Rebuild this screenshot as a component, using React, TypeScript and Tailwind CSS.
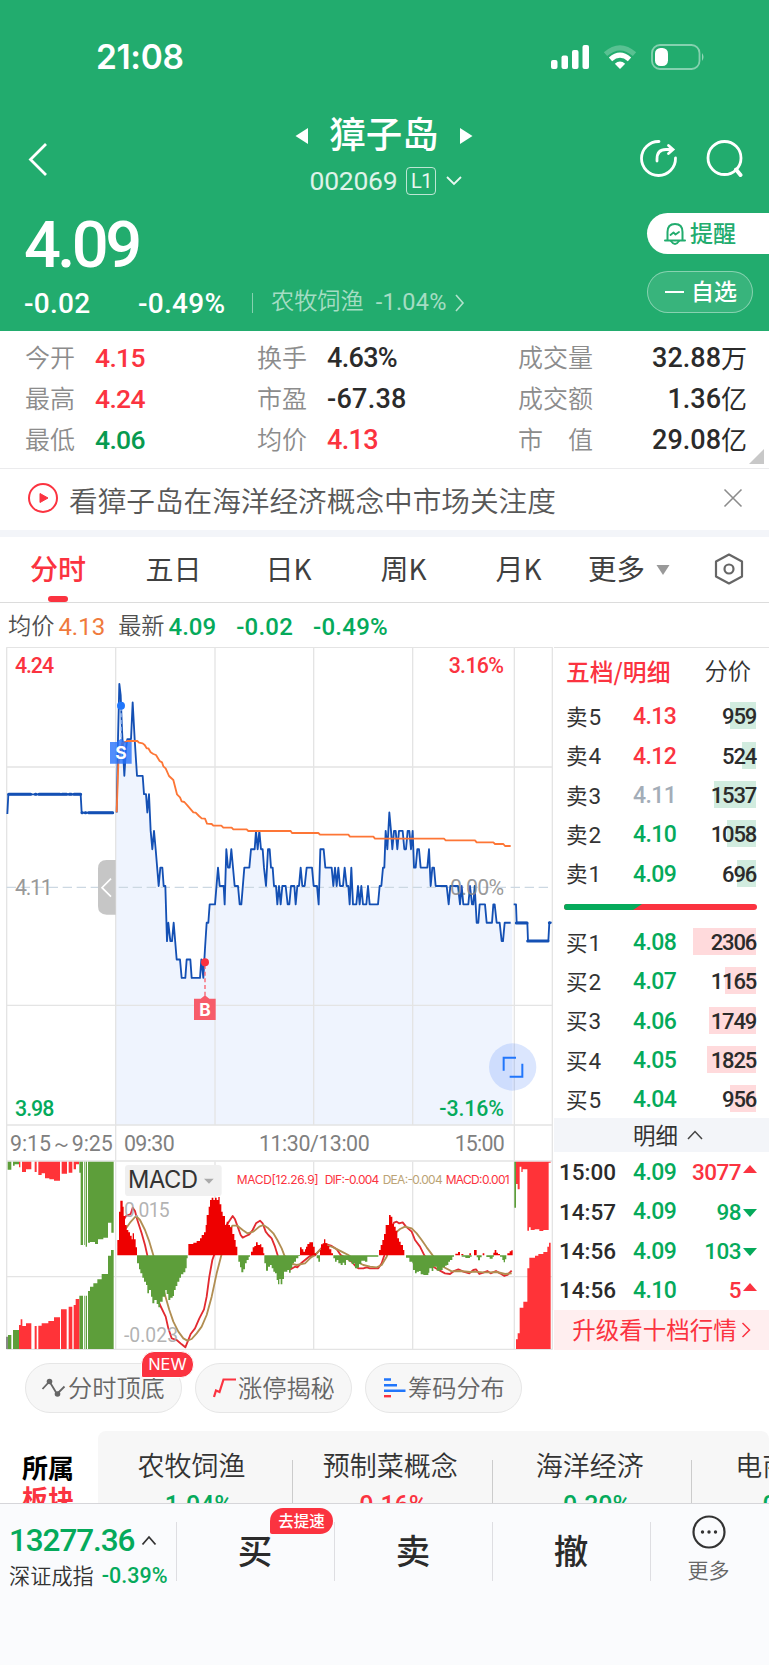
import React from 'react';
import clsx from 'clsx';

type Pt = [number, number];

interface NumProps {
  className?: string;
  children: React.ReactNode;
}

const Num: React.FC<NumProps> = ({ className, children }) => (
  <span className={clsx("font-['Roboto',sans-serif] font-medium leading-none tracking-[-0.025em] whitespace-nowrap", className)}>
    {children}
  </span>
);

const quotes = [
  [['今开', '4.15', 'text-[#fb3340]'], ['换手', '4.63%', 'text-[#2b2b2b]'], ['成交量', '32.88', '万']],
  [['最高', '4.24', 'text-[#fb3340]'], ['市盈', '-67.38', 'text-[#2b2b2b]'], ['成交额', '1.36', '亿']],
  [['最低', '4.06', 'text-[#079a50]'], ['均价', '4.13', 'text-[#fb3340]'], ['市　值', '29.08', '亿']],
];

const asks = [
  { label: '卖5', price: '4.13', qty: 959, bar: 26, color: 'text-[#fb3340]' },
  { label: '卖4', price: '4.12', qty: 524, bar: 14, color: 'text-[#fb3340]' },
  { label: '卖3', price: '4.11', qty: 1537, bar: 42, color: 'text-[#a3adb8]' },
  { label: '卖2', price: '4.10', qty: 1058, bar: 29, color: 'text-[#05aa5b]' },
  { label: '卖1', price: '4.09', qty: 696, bar: 19, color: 'text-[#05aa5b]' },
];

const bids = [
  { label: '买1', price: '4.08', qty: 2306, bar: 63, color: 'text-[#05aa5b]' },
  { label: '买2', price: '4.07', qty: 1165, bar: 31, color: 'text-[#05aa5b]' },
  { label: '买3', price: '4.06', qty: 1749, bar: 47, color: 'text-[#05aa5b]' },
  { label: '买4', price: '4.05', qty: 1825, bar: 49, color: 'text-[#05aa5b]' },
  { label: '买5', price: '4.04', qty: 956, bar: 26, color: 'text-[#05aa5b]' },
];

const ticks = [
  { time: '15:00', price: '4.09', qty: 3077, up: true },
  { time: '14:57', price: '4.09', qty: 98, up: false },
  { time: '14:56', price: '4.09', qty: 103, up: false },
  { time: '14:56', price: '4.10', qty: 5, up: true },
];

// [x, ticks below the previous close]
const morning: Pt[] = [
  [350, -4], [354, -8], [358, -11], [362, -10.4], [366, -8.5], [373, -6], [378, -7.5], [382, -8], [393, -8], [398, -10], [404, -8], [411, -6],
  [428, -6], [432, -5], [438, -5], [442, -4], [447, -5], [452, -3], [457, -2], [462, -3], [467, -2], [476, 0], [481, -1], [487, -1],
  [491, 0], [496, 0], [501, 3], [505, 2], [511, 3], [516, 3], [521, 2], [530, 4], [540, 4], [545, 5], [556, 5], [560, 4], [571, 4],
  [575, 5], [600, 5], [604, 4], [610, 5], [615, 3.4], [620, 2], [625, 2], [629, 1], [645, 1], [654, -1], [659, 0], [671, 0], [674, 1],
  [679, -2], [684, -1], [689, -1], [694, -2], [704, 0], [714, 0], [719, 1], [724, 1], [733, -1], [748, -1], [753, -2], [764, -2],
  [768, -3], [773, -2], [778, -3], [783, -2], [788, -2], [792, -1], [798, 0], [804, -2], [809, -2], [813, -1], [818, -1], [822, 0],
  [828, 0], [832, 1], [837, 0], [842, 1], [847, 0], [857, 0], [863, 1], [868, 1], [873, 0], [883, 0], [887, 1], [892, 0], [897, 0],
  [902, -1], [907, 0], [914, 0], [920, -1], [936, -1], [941, 0],
];

const afternoon: Pt[] = [
  [951, 0], [956, 1], [961, -2], [971, -2], [976, -1], [995, -1], [1000, 0], [1005, -1], [1010, 0], [1015, -1], [1020, 0], [1029, 0],
  [1034, -1], [1040, 0], [1045, 0], [1049, 1], [1054, -1], [1059, 1], [1069, 1], [1074, 0], [1079, 1], [1084, 0], [1089, 1], [1099, 1],
  [1104, 0], [1109, 1], [1134, 1], [1139, 0], [1144, 0], [1149, -1], [1153, -1], [1157, -3], [1162, -2], [1168, -4], [1173, -3],
  [1177, -2], [1182, -3], [1187, -3], [1192, -2], [1197, -3], [1208, -3], [1213, -2], [1218, -2], [1223, -3], [1228, -3], [1233, -2],
  [1238, -3], [1242, -1], [1247, -1], [1252, -2], [1257, -2], [1262, -1], [1282, -1], [1287, -2], [1292, 0], [1297, -1], [1302, -1],
  [1307, 0], [1340, 0], [1346, 1], [1351, 0], [1374, 0], [1380, 1], [1385, 0], [1390, 1], [1405, 1], [1410, 0], [1416, 1], [1420, 1],
  [1424, 0], [1430, 2], [1435, 2], [1439, 1], [1455, 1], [1460, 2], [1476, 2], [1480, 1], [1484, 1], [1490, 2], [1499, 2], [1505, 3],
  [1509, 3], [1514, 2], [1532, 2],
];

const average: Pt[] = [
  [350, 517], [355, 370], [366, 310], [382, 303], [412, 303], [417, 308], [428, 310], [434, 315], [440, 325], [445, 325], [452, 337],
  [460, 342], [468, 345], [479, 363], [486, 367], [490, 379], [497, 385], [507, 408], [520, 420], [531, 463], [540, 472], [545, 484],
  [553, 486], [562, 496], [580, 517], [587, 518], [597, 528], [605, 535], [615, 536], [621, 551], [635, 552], [640, 557], [664, 557],
  [670, 563], [695, 563], [700, 568], [740, 568], [745, 573], [872, 573], [876, 579], [955, 579], [960, 584], [1045, 584],
  [1050, 590], [1120, 590], [1125, 596], [1332, 596], [1337, 601], [1425, 601], [1430, 607], [1480, 607], [1485, 612], [1510, 612],
  [1515, 618], [1532, 618],
];

const dif: Pt[] = [
  [362, 345], [378, 318], [385, 315], [392, 312], [398, 293], [405, 303], [412, 330], [425, 370], [435, 405], [442, 436], [465, 540],
  [480, 585], [497, 620], [505, 655], [515, 685], [530, 690], [545, 703], [556, 712], [563, 695], [572, 672], [585, 655], [598, 625],
  [612, 598], [620, 560], [628, 500], [637, 450], [642, 436], [665, 370], [680, 345], [698, 318], [705, 328], [713, 350], [722, 375],
  [728, 383], [738, 378], [748, 373], [758, 360], [768, 340], [780, 332], [788, 340], [797, 365], [805, 375], [815, 385], [825, 410],
  [833, 436], [850, 470], [872, 478], [885, 470], [892, 472], [905, 458], [915, 450], [930, 438], [945, 436], [975, 402], [995, 408],
  [1010, 418], [1022, 435], [1040, 445], [1055, 455], [1068, 470], [1075, 475], [1090, 475], [1100, 472], [1110, 475], [1135, 475],
  [1145, 460], [1153, 436], [1175, 350], [1182, 338], [1190, 335], [1197, 340], [1208, 337], [1218, 350], [1235, 365], [1245, 390],
  [1260, 410], [1273, 436], [1300, 470], [1320, 482], [1335, 490], [1350, 492], [1362, 483], [1375, 478], [1390, 485], [1408, 490],
  [1420, 480], [1428, 478], [1438, 492], [1450, 488], [1462, 483], [1472, 490], [1488, 483], [1500, 490], [1513, 498], [1522, 495],
  [1535, 482],
];

const dea: Pt[] = [
  [376, 358], [390, 338], [408, 318], [420, 330], [435, 360], [448, 395], [460, 436], [485, 520], [495, 555], [508, 600], [520, 635],
  [535, 665], [550, 685], [562, 692], [575, 687], [590, 670], [605, 650], [620, 615], [635, 560], [650, 490], [664, 436], [680, 375],
  [697, 347], [712, 347], [728, 360], [742, 370], [760, 365], [778, 350], [790, 345], [805, 355], [820, 370], [832, 390], [845, 415],
  [853, 436], [870, 460], [890, 465], [915, 460], [930, 445], [943, 436], [960, 420], [980, 405], [1000, 412], [1025, 425],
  [1045, 435], [1070, 455], [1090, 465], [1110, 470], [1130, 472], [1145, 465], [1160, 440], [1185, 370], [1200, 357], [1215, 350],
  [1235, 355], [1250, 370], [1265, 390], [1280, 412], [1298, 436], [1325, 468], [1355, 484], [1380, 483], [1410, 486], [1425, 485],
  [1450, 487], [1470, 487], [1490, 486], [1515, 492], [1535, 490],
];

// each heap is a run of [x, top] steps; the last entry closes it
const redHeaps: Pt[][] = [
  [[352, 390], [357, 305], [361, 272], [368, 290], [371, 318], [375, 345], [380, 360], [385, 367], [390, 377], [395, 388], [398, 370], [402, 388], [407, 412], [411, 436]],
  [[565, 402], [580, 398], [590, 393], [600, 385], [605, 375], [612, 367], [617, 345], [620, 315], [626, 290], [630, 270], [635, 263], [640, 270], [645, 263], [650, 270], [655, 261], [659, 283], [664, 305], [668, 318], [675, 345], [680, 335], [685, 345], [690, 352], [697, 372], [703, 390], [707, 410], [712, 436]],
  [[753, 425], [758, 412], [763, 408], [768, 397], [773, 405], [780, 403], [784, 412], [790, 430], [793, 436]],
  [[900, 412], [905, 418], [910, 425], [915, 418], [918, 410], [922, 402], [928, 397], [939, 410], [944, 430], [948, 436]],
  [[960, 420], [963, 403], [968, 400], [972, 388], [976, 400], [982, 408], [988, 418], [994, 430], [999, 436]],
  [[1137, 420], [1142, 405], [1147, 390], [1152, 372], [1157, 345], [1167, 315], [1172, 320], [1177, 342], [1182, 350], [1187, 362], [1192, 385], [1197, 395], [1202, 405], [1209, 420], [1213, 436]],
  [[1366, 431], [1374, 426], [1380, 436]], [[1384, 432], [1390, 436]], [[1408, 430], [1413, 436]], [[1422, 420], [1430, 436]],
  [[1448, 430], [1453, 436]], [[1480, 428], [1484, 420], [1489, 428], [1494, 432], [1500, 436]], [[1522, 430], [1529, 424], [1534, 421], [1538, 436]],
];

const greenHeaps: Pt[][] = [
  [[411, 460], [417, 478], [421, 490], [427, 503], [432, 515], [438, 525], [442, 550], [447, 540], [453, 560], [457, 580], [463, 570], [470, 582], [475, 592], [480, 575], [488, 560], [496, 540], [500, 552], [505, 570], [511, 563], [518, 558], [522, 540], [527, 528], [532, 515], [538, 503], [543, 493], [550, 487], [556, 475], [560, 445], [563, 436]],
  [[715, 455], [720, 472], [724, 487], [730, 478], [735, 460], [740, 450], [746, 440], [750, 436]],
  [[793, 460], [798, 482], [804, 470], [810, 465], [815, 475], [820, 485], [825, 490], [830, 510], [834, 523], [838, 507], [842, 523], [847, 507], [852, 485], [862, 480], [867, 488], [872, 475], [877, 460], [882, 455], [888, 445], [895, 438], [900, 436]],
  [[950, 445], [955, 455], [960, 436]],
  [[1000, 445], [1005, 455], [1010, 450], [1015, 460], [1022, 465], [1028, 458], [1033, 465], [1038, 450], [1046, 455], [1055, 462], [1062, 460], [1065, 475], [1072, 473], [1077, 462], [1084, 452], [1095, 455], [1102, 440], [1135, 436]],
  [[1218, 443], [1228, 455], [1237, 460], [1239, 480], [1245, 490], [1250, 485], [1257, 483], [1262, 493], [1270, 495], [1285, 488], [1288, 475], [1295, 483], [1300, 470], [1310, 482], [1320, 480], [1328, 472], [1335, 467], [1340, 465], [1345, 455], [1350, 450], [1357, 440], [1362, 436]],
  [[1385, 440], [1396, 444], [1410, 440], [1415, 436]], [[1430, 442], [1434, 451], [1440, 442], [1445, 436]],
  [[1459, 441], [1469, 446], [1478, 440], [1482, 436]], [[1500, 440], [1507, 450], [1511, 457], [1515, 448], [1519, 436]],
];

// [x0, x1, y] call-auction bars, hung from the top or standing on the floor
const auctionTopGreen = [[23, 34, 179], [39, 44, 167], [44, 57, 163], [238, 242, 188], [242, 249, 405], [252, 254, 405], [257, 261, 410], [264, 270, 398], [270, 285, 396], [285, 294, 402], [294, 310, 388], [310, 324, 383], [324, 334, 338], [334, 341, 368], [1543, 1548, 293]];
const auctionTopRed = [[57, 61, 172], [66, 78, 186], [78, 94, 178], [104, 110, 186], [115, 125, 195], [125, 135, 190], [135, 148, 205], [148, 162, 208], [162, 180, 212], [185, 201, 191], [206, 217, 188], [221, 228, 178], [228, 237, 163], [1548, 1553, 222], [1553, 1559, 238], [1559, 1564, 170], [1564, 1568, 186], [1568, 1582, 178], [1582, 1587, 362], [1587, 1592, 352], [1592, 1604, 360], [1604, 1618, 358], [1618, 1630, 363], [1630, 1646, 360], [1646, 1652, 158]];
const auctionBottomGreen = [[24, 34, 675], [39, 57, 660], [238, 249, 557], [252, 254, 557], [257, 261, 557], [264, 270, 543], [270, 280, 530], [280, 292, 520], [292, 305, 508], [305, 324, 492], [324, 333, 437], [333, 341, 420]];
const auctionBottomRed = [[57, 62, 645], [62, 67, 628], [67, 78, 648], [78, 94, 640], [104, 110, 648], [115, 125, 647], [125, 145, 640], [145, 162, 633], [162, 180, 622], [183, 200, 598], [206, 217, 590], [221, 227, 585], [227, 238, 567], [1548, 1553, 688], [1553, 1559, 670], [1559, 1570, 593], [1570, 1582, 575], [1582, 1588, 475], [1588, 1605, 443], [1605, 1615, 437], [1615, 1630, 432], [1630, 1642, 426], [1642, 1647, 410], [1647, 1652, 398]];

const line = (pts: Pt[]) => pts.map(([x, y]) => `${x},${y}`).join(' ');

const steps = (pts: Pt[]) => {
  let d = `M${pts[0][0]} 436`;
  pts.forEach(([x, y]) => { d += `H${x}V${y}`; });
  return d + 'Z';
};

const bars = (list: number[][], edge: number) =>
  list.map(([a, b, y]) => `M${a} ${edge}H${b}V${y}H${a}Z`).join('');

const price = [...morning, ...afternoon].map(([x, k]) => [x, 738 + 55.1 * k] as Pt);

const Chart = () => (
  <svg width="554" height="703" viewBox="0 1941 1662 2109" className="block shrink-0" fontFamily="Roboto, sans-serif">
    {/* price pane */}
    <g transform="translate(0 1920)">
      <path d={`M347 1455V518L${line(price)}L1537 848V1455Z`} fill="#eff4fe" />
      <g stroke="#e4e4e4" strokeWidth="4" fill="none">
        <path d="M20 22H1658M20 381H1658M20 1096H1658M20 1455H1658M20 1563H1658" />
        <path d="M20 22V2128M347 22V2128M645 22V1455M941 22V1455M1238 22V1455M1543 22V2128M1657 22V2128" />
      </g>
      <path d="M20 742H1658" stroke="#ccd8e2" strokeWidth="3.5" strokeDasharray="28 14" />
      <g fontSize="64" fontWeight="500">
        <text x="45" y="98" fill="#fb3340" textLength="117">4.24</text>
        <text x="45" y="765" fill="#999" fontWeight="400" textLength="113">4.11</text>
        <text x="45" y="1428" fill="#05aa5b" textLength="118">3.98</text>
        <text x="536" y="98" fill="#fb3340" textLength="166" transform="translate(810 0)">3.16%</text>
        <text x="508" y="1428" fill="#05aa5b" textLength="194" transform="translate(810 0)">-3.16%</text>
      </g>
      <path d="M347 660H320Q294 660 294 686V798Q294 824 320 824H347Z" fill="#c6c6c6" />
      <path d="M333 716L306 743L333 770" fill="none" stroke="#fff" strokeWidth="5" />
      <g fill="none" stroke="#1450b4" strokeWidth="5.5" strokeLinejoin="round">
        <path d="M22 522L25 463H242L245 518H341" />
        <polyline points={line(price)} />
        <path d="M1541 793H1548L1550 848H1582L1584 903H1645L1648 848H1655" />
      </g>
      <g stroke="#1450b4" strokeWidth="9" strokeLinecap="round">
        <path d="M26 463H92M106 463H108M117 463H180M186 463H200M208 463H214M222 463H242M246 518H247M256 518H257M266 518H338" />
        <path d="M1549 849H1581M1583 903H1644M1648 848H1649" />
      </g>
      <polyline points={line(average)} fill="none" stroke="#fd7636" strokeWidth="5.5" strokeLinejoin="round" />
      <text x="1350" y="765" fill="#888" fillOpacity="0.85" fontSize="64" textLength="162">0.00%</text>

      <path d="M363 200V300" stroke="#a9c8fb" strokeWidth="4" strokeDasharray="12 8" />
      <circle cx="363" cy="197" r="12" fill="#2176fb" />
      <path d="M330 306H350L363 296L376 306H395V371H330Z" fill="#2672fb" fillOpacity="0.8" />
      <text x="363" y="358" textAnchor="middle" fontFamily="Inter, sans-serif" fontWeight="700" fontSize="52" fill="#fff">S</text>
      <path d="M615 975V1068" stroke="#f9606d" strokeWidth="4" strokeDasharray="12 8" />
      <circle cx="615" cy="967" r="12" fill="#fb3340" />
      <path d="M582 1076H602L615 1066L628 1076H647V1140H582Z" fill="#f75c6a" />
      <text x="615" y="1127" textAnchor="middle" fontFamily="Inter, sans-serif" fontWeight="700" fontSize="52" fill="#fff">B</text>

      <circle cx="1538" cy="1281" r="71" fill="#4a82fb" fillOpacity="0.2" />
      <path d="M1548 1253H1511V1292M1529 1310H1567V1271" fill="none" stroke="#2176fb" strokeWidth="6" />

      <g fontSize="64" fill="#808080">
        <text x="30" y="1534" textLength="308" lengthAdjust="spacing">9:15～9:25</text>
        <text x="372" y="1534" textLength="152">09:30</text>
        <text x="777" y="1534" textLength="332">11:30/13:00</text>
        <text x="1364" y="1534" textLength="150">15:00</text>
      </g>
    </g>

    {/* macd pane */}
    <g transform="translate(0 3330)">
      <path d="M20 500H1658M20 718H1658M645 155V718M941 155V718M1238 155V718" stroke="#e4e4e4" strokeWidth="4" />
      <rect x="375" y="165" width="290" height="93" rx="10" fill="#f0f0f0" />
      <text x="384" y="233" fontFamily="Inter, sans-serif" fontSize="71" textLength="210" fill="#333">MACD</text>
      <path d="M612 206H641L627 221Z" fill="#aaa" />
      <g fontFamily="Inter, sans-serif" fontSize="36" fontWeight="400">
        <text x="710" y="223" fill="#fb3340" textLength="246">MACD[12.26.9]</text>
        <text x="974" y="223" fill="#fb3340" textLength="164">DIF:-0.004</text>
        <text x="1148" y="223" fill="#bba375" textLength="180">DEA:-0.004</text>
        <text x="1337" y="223" fill="#fb3340" textLength="192">MACD:0.001</text>
      </g>
      <polyline points={line(dif)} fill="none" stroke="#e22a30" strokeWidth="5.5" strokeLinejoin="round" />
      <polyline points={line(dea)} fill="none" stroke="#b18e52" strokeWidth="5.5" strokeLinejoin="round" />
      <path d={redHeaps.map(steps).join('')} fill="#ee0000" />
      <path d={greenHeaps.map(steps).join('')} fill="#5d9e3a" />
      <path d={bars(auctionTopGreen, 155) + bars(auctionBottomGreen, 717)} fill="#5d9e3a" />
      <path d={bars(auctionTopRed, 155) + bars(auctionBottomRed, 717)} fill="#ff3338" />
      <path d="M18 680H24V717H18Z" fill="#888" />
      <g fontSize="58" fill="#a5a5a5" fillOpacity="0.85">
        <text x="372" y="321" textLength="137">0.015</text>
        <text x="372" y="696" textLength="162">-0.023</text>
      </g>
    </g>
  </svg>
);

const StatusBar = () => (
  <div className="flex h-[114px] items-center justify-between pr-[63px] pl-[96px]">
    <span className="pt-px font-['Inter',sans-serif] text-[33.500px] font-semibold leading-none tracking-[-0.01em]">21:08</span>
    <svg width="156" height="30" viewBox="0 0 156 30" fill="none">
      <g fill="#fff">
        <rect x="1" y="18" width="6.5" height="9" rx="2" />
        <rect x="11.500" y="13.500" width="6.500" height="13.500" rx="2" />
        <rect x="22" y="8" width="6.500" height="19" rx="2" />
        <rect x="32.500" y="3" width="6.500" height="24" rx="2" />
        <path d="M70 27L64.800 21.800Q70 17.200 75.200 21.800Z" />
      </g>
      <path d="M55.500 12.200Q70 -0.500 84.500 12.200" stroke="#fff" strokeOpacity="0.25" strokeWidth="5" />
      <path d="M60.500 17.300Q70 9 79.500 17.300" stroke="#fff" strokeWidth="5" />
      <rect x="102" y="3" width="47.500" height="24" rx="8" stroke="#fff" strokeOpacity="0.45" strokeWidth="1.800" />
      <rect x="105" y="6" width="13" height="18" rx="5.500" fill="#fff" />
      <path d="M152 11Q155 15 152 19Z" fill="#fff" fillOpacity="0.5" />
    </svg>
  </div>
);

const Header = () => (
  <header className="flex h-[331px] flex-col bg-[#22ac6e] text-white">
    <StatusBar />
    <div className="flex h-[90px] items-start justify-between pr-[26px] pl-[28px]">
      <svg width="104" height="36" viewBox="0 0 104 36" fill="none" className="mt-[28px]">
        <path d="M18 2L2.500 17.500L18 33" stroke="#fff" strokeWidth="2.800" />
      </svg>
      <div className="flex flex-col items-center">
        <div className="-ml-[3px] flex h-[44px] items-center gap-[21px]">
          <svg width="13" height="18" viewBox="0 0 13 18"><path d="M13 1V17L0.500 9Z" fill="#fff" /></svg>
          <span className="-mt-[5px] text-[36.5px] font-medium leading-none">獐子岛</span>
          <svg width="13" height="18" viewBox="0 0 13 18"><path d="M0 1V17L12.500 9Z" fill="#fff" /></svg>
        </div>
        <div className="mt-[9px] flex items-center pl-[2px]">
          <Num className="text-[26.5px] font-normal! tracking-[-0.01em]! text-white/85">002069</Num>
          <span className="ml-[9px] flex h-[28px] w-[30px] items-center justify-center rounded-[4px] border border-white/70">
            <Num className="text-[20px] font-normal! text-white/90">L1</Num>
          </span>
          <svg width="18" height="12" viewBox="0 0 18 12" fill="none" className="ml-[9px]"><path d="M2 2L9 9L16 2" stroke="#fff" strokeOpacity="0.9" strokeWidth="1.800" /></svg>
        </div>
      </div>
      <svg width="104" height="40" viewBox="0 0 104 40" fill="none" stroke="#fff" strokeWidth="2.800" strokeLinecap="round" className="mt-[25px]">
        <path d="M20 2.500A17 17 0 1 0 36.500 19" />
        <path d="M18 22V20Q18 10.500 27 10.500H33M29.500 6.500L34 10.500L29.500 14.500" />
        <circle cx="85.500" cy="19" r="16.500" />
        <path d="M97 30.500L101.500 36" strokeWidth="4" />
      </svg>
    </div>
    <div className="flex flex-1 justify-between">
      <div className="flex flex-col pl-[24px]">
        <Num className="mt-[9px] h-[64px] text-[65px] leading-[64px]! tracking-[-0.055em]!">4.09</Num>
        <div className="mt-[13px] flex h-[28px] items-center">
          <Num className="w-[114px] text-[28px] tracking-[0.01em]!">-0.02</Num>
          <Num className="w-[114px] text-[28px] tracking-[0.01em]!">-0.49%</Num>
          <span className="-mt-[3px] h-[20px] w-px bg-white/45" />
          <span className="-mt-[9px] ml-[18px] text-[23.200px] font-[350] leading-none text-white/60">农牧饲渔</span>
          <Num className="-mt-[3px] ml-[12px] text-[23.500px] font-normal! tracking-[0.01em]! text-white/60">-1.04%</Num>
          <svg width="12" height="20" viewBox="0 0 12 20" fill="none" className="-mt-[3px] ml-[7px]"><path d="M2 2L9 10L2 18" stroke="#fff" strokeOpacity="0.65" strokeWidth="1.600" /></svg>
        </div>
      </div>
      <div className="flex flex-col items-start pt-[9px]">
        <button className="flex h-[41px] w-[122px] items-center rounded-l-full bg-white pl-[16px] text-[#22ac6e]">
          <svg width="24" height="24" viewBox="0 0 24 24" fill="none" stroke="#22ac6e" strokeWidth="2" strokeLinejoin="round" strokeLinecap="round">
            <path d="M2 18.500H22M4.500 18V10Q4.500 2 12 2Q19.500 2 19.500 10V18" />
            <path d="M8 19Q12 25 16 19" />
            <path d="M7.500 13L10.500 10.500L12.500 12.500L16 10" strokeWidth="1.800" />
          </svg>
          <span className="-mt-[3px] ml-[3px] text-[23px] font-medium leading-none">提醒</span>
        </button>
        <button className="mt-[17px] flex h-[42px] w-[106px] items-center rounded-full border border-white/40 bg-white/10 pl-[17px]">
          <span className="h-[2px] w-[19px] bg-white" />
          <span className="-mt-[3px] ml-[7px] text-[23px] font-medium leading-none">自选</span>
        </button>
      </div>
    </div>
  </header>
);

const Quotes = () => (
  <section className="relative flex h-[138px] flex-col border-b border-[#ebebed] pt-[5px] pr-[22px] pl-[25px]">
    {quotes.map(([a, b, c]) => (
      <div key={a[0]} className="flex h-[41px] items-center text-[25px] leading-none">
        <span className="w-[70px] font-[350] text-[#8c8c8c]">{a[0]}</span>
        <Num className={clsx('w-[162px] pt-[3px] text-[26.5px]', a[2])}>{a[1]}</Num>
        <span className="w-[70px] font-[350] text-[#8c8c8c]">{b[0]}</span>
        <Num className={clsx('w-[191px] pt-[3px] text-[27px]', b[2], b[1][0] === '-' && 'tracking-[0.01em]!')}>{b[1]}</Num>
        <span className="font-[350] text-[#8c8c8c]">{c[0]}</span>
        <span className="ml-auto flex items-center text-[#2b2b2b]">
          <Num className="pt-[3px] text-[27px] tracking-[0em]!">{c[1]}</Num>
          <span className="pt-[1px] text-[26px]">{c[2]}</span>
        </span>
      </div>
    ))}
    <svg width="16" height="16" viewBox="0 0 16 16" className="absolute right-[4px] bottom-[3px]"><path d="M15 0V15H0Z" fill="#c8c8c8" /></svg>
  </section>
);

const News = () => (
  <section className="flex h-[61px] items-center pr-[26px] pl-[27px]">
    <svg width="32" height="32" viewBox="0 0 32 32" fill="none" className="-mt-[3px]">
      <circle cx="16" cy="16" r="14" stroke="#fb3340" strokeWidth="2" />
      <path d="M13 11.500V20.500L21 16Z" fill="#fb3340" stroke="#fb3340" strokeLinejoin="round" />
    </svg>
    <span className="ml-[10px] pt-px text-[28.650px] font-[350] leading-none text-[#585858]">看獐子岛在海洋经济概念中市场关注度</span>
    <svg width="20" height="20" viewBox="0 0 20 20" className="-mt-[3px] ml-auto"><path d="M1.500 1.500L18.500 18.500M18.500 1.500L1.500 18.500" stroke="#8c8c8c" strokeWidth="1.600" /></svg>
  </section>
);

const Tabs = () => (
  <nav className="flex h-[66px] items-center border-b border-[#dcdcdc] text-[28px] leading-none text-[#404040]">
    <div className="relative flex h-full w-[116px] items-center justify-center pb-[3px] font-medium text-[#fb3340]">
      分时
      <span className="absolute bottom-0 left-[48px] h-[6px] w-[20px] rounded-[3px] bg-[#fb3340]" />
    </div>
    {['五日', '日K', '周K', '月K'].map((t) => (
      <div key={t} className="w-[115px] pb-[3px] text-center">{t}</div>
    ))}
    <div className="ml-[12px] flex items-center pb-[3px] text-[28.500px]">
      更多
      <svg width="14" height="10" viewBox="0 0 14 10" className="mt-[3px] ml-[11px]"><path d="M0.500 0H13.500L7 10Z" fill="#999" /></svg>
    </div>
    <svg width="30" height="32" viewBox="0 0 30 32" fill="none" stroke="#666" strokeWidth="2.200" strokeLinejoin="round" className="-mt-[2px] ml-[44px]">
      <path d="M15 1.500L28 8.500V23.500L15 30.500L2 23.500V8.500Z" />
      <circle cx="15" cy="16" r="4.500" />
    </svg>
  </nav>
);

const BookRow = ({ row, tone }: { row: (typeof asks)[number]; tone: string }) => (
  <div className="flex h-[39.350px] items-center pr-[13px] pl-[12px]">
    <span className="flex w-[67px] items-center text-[21.500px] leading-none text-[#333]">
      {row.label[0]}
      <Num className="pt-[3px] pl-[1px] text-[22.5px] font-normal!">{row.label[1]}</Num>
    </span>
    <Num className={clsx('pt-[2px] text-[23px]', row.color)}>{row.price}</Num>
    <div className="relative ml-auto flex h-[27px] items-center">
      <span className={clsx('absolute top-0 right-0 h-full', tone)} style={{ width: row.bar }} />
      <Num className="relative pt-[3px] text-[22px] tracking-[-0.055em]! text-[#2b2b2b]">{row.qty}</Num>
    </div>
  </div>
);

const OrderBook = () => (
  <aside className="flex w-[215px] flex-col border-t border-[#e2e2e2]">
    <div className="flex h-[48px] items-center justify-between pr-[18px] pb-[3px] pl-[12px] leading-none">
      <span className="text-[23.800px] font-medium text-[#fb3340]">五档/明细</span>
      <span className="text-[23.300px] font-[350] text-[#333]">分价</span>
    </div>
    {asks.map((r) => <BookRow key={r.label} row={r} tone="bg-[#d1ecdf]" />)}
    <div className="flex h-[29px] items-center pr-[12px] pl-[10px]">
      <svg width="193" height="6" viewBox="0 0 193 6">
        <rect width="193" height="6" rx="3" fill="#fb3340" />
        <path d="M3 0H78L69 6H3Q0 6 0 3Q0 0 3 0Z" fill="#05aa5b" />
      </svg>
    </div>
    {bids.map((r) => <BookRow key={r.label} row={r} tone="bg-[#ffdadc]" />)}
    <div className="flex h-[34px] items-center justify-center bg-[#f3f5f9] pb-[2px] pl-[14px] text-[22.500px] leading-none text-[#333]">
      明细
      <svg width="18" height="12" viewBox="0 0 18 12" fill="none" className="mt-[2px] ml-[8px]"><path d="M2 10L9 2.500L16 10" stroke="#444" strokeWidth="1.500" /></svg>
    </div>
    {ticks.map((t, i) => (
      <div key={i} className="flex h-[39.350px] items-center pr-[12px] pl-[5px]">
        <Num className="w-[74px] pt-px text-[22.5px] tracking-[0em]! text-[#2b2b2b]">{t.time}</Num>
        <Num className="pt-px text-[23px] text-[#05aa5b]">{t.price}</Num>
        <Num className={clsx('ml-auto pt-px text-[22.5px]', t.up ? 'text-[#fb3340]' : 'text-[#05aa5b]')}>{t.qty}</Num>
        {t.up ? (
          <svg width="14" height="8" viewBox="0 0 14 8" className="-mt-[6px] ml-[2px]"><path d="M0 8L7 0L14 8Z" fill="#fb3340" /></svg>
        ) : (
          <svg width="14" height="8" viewBox="0 0 14 8" className="mt-[3px] ml-[2px]"><path d="M0 0L7 8L14 0Z" fill="#05aa5b" /></svg>
        )}
      </div>
    ))}
    <div className="flex flex-1 items-center justify-center bg-[#ffeeef] pb-px text-[23.500px] leading-none text-[#fb3340]">
      升级看十档行情
      <svg width="10" height="18" viewBox="0 0 10 18" fill="none" className="mt-[2px] ml-[4px]"><path d="M1.500 2L8.500 9L1.500 16" stroke="#fb3340" strokeWidth="1.500" /></svg>
    </div>
  </aside>
);

const Tools = () => (
  <section className="flex h-[81px] items-start gap-[13px] pt-[13px] pl-[25px] text-[24.200px] font-[350] leading-none text-[#666]">
    <div className="relative flex h-[50px] w-[157px] items-center rounded-full border border-[#e6e6e6] bg-[#f7f7f7] pl-[15px]">
      <svg width="25" height="20" viewBox="0 0 25 20" fill="none">
        <path d="M1.500 11L8.500 3.500L16 16L23.500 8.500" stroke="#666" strokeWidth="1.800" />
        <circle cx="8.500" cy="3.500" r="2.800" fill="#666" />
        <circle cx="16.500" cy="16" r="2.800" fill="#666" />
      </svg>
      <span className="ml-[2px] pb-px">分时顶底</span>
      <span className="absolute -top-[13px] left-[115px] flex h-[27px] w-[53px] items-center justify-center rounded-t-[13px] rounded-r-[13px] rounded-bl-[2px] border border-white bg-[#fb3340] font-['Inter',sans-serif] text-[16.500px] font-normal text-white">NEW</span>
    </div>
    <div className="flex h-[50px] w-[157px] items-center rounded-full border border-[#e6e6e6] bg-[#f7f7f7] pl-[17px]">
      <svg width="23" height="20" viewBox="0 0 23 20" fill="none"><path d="M1 19L3 12.500L6.500 14L10.500 1.500H23" stroke="#fb3340" strokeWidth="2.200" /></svg>
      <span className="ml-[2px] pb-px">涨停揭秘</span>
    </div>
    <div className="flex h-[50px] w-[157px] items-center rounded-full border border-[#e6e6e6] bg-[#f7f7f7] pl-[17px]">
      <svg width="23" height="20" viewBox="0 0 23 20">
        <path d="M1 1.500H8M1 7.200H14M1 12.800H22.500" stroke="#2176fb" strokeWidth="2.400" />
        <path d="M1 18.200H8" stroke="#fb3340" strokeWidth="2.400" />
      </svg>
      <span className="ml-[2px] pb-px">筹码分布</span>
    </div>
  </section>
);

const boards = [
  { name: '农牧饲渔', pct: '-1.04%', color: 'text-[#05aa5b]' },
  { name: '预制菜概念', pct: '0.16%', color: 'text-[#fb3340]' },
  { name: '海洋经济', pct: '-0.30%', color: 'text-[#05aa5b]' },
  { name: '电商概念', pct: '-0.25%', color: 'text-[#05aa5b]' },
];

const Boards = () => (
  <section className="flex h-[72px] overflow-hidden">
    <div className="flex w-[98px] shrink-0 flex-col pt-[20px] pl-[22px] text-[26px] font-bold leading-[31px] text-black">
      <span>所属</span>
      <span className="text-[#fb3340]">板块</span>
    </div>
    <div className="flex h-[120px] w-[671px] shrink-0 overflow-hidden rounded-t-[8px] bg-[#f7f7f7]">
      {boards.map((b, i) => (
        <div key={b.name} className="flex shrink-0">
          {i > 0 && <span className="mt-[29px] h-[70px] w-px bg-[#ccc]" />}
          <div className={clsx('flex flex-col items-center pt-[20px] pr-[4px]', i === 0 ? 'w-[194px] pr-[7px]' : 'w-[198.500px]')}>
            <span className="text-[27px] leading-[27px] font-[350] whitespace-nowrap text-[#333]">{b.name}</span>
            <Num className={clsx('mt-[15px] pl-[6px] text-[25px] tracking-[0em]!', b.color)}>{b.pct}</Num>
          </div>
        </div>
      ))}
    </div>
  </section>
);

const Footer = () => (
  <footer className="flex h-[162px] items-start border-t border-[#d6d6da] bg-[#fafbfd]">
    <div className="flex h-[95px] w-[176px] flex-col pt-[21px] pl-[9px]">
      <div className="flex items-center">
        <Num className="text-[31.5px] tracking-[-0.035em]! text-[#05aa5b]">13277.36</Num>
        <svg width="16" height="11" viewBox="0 0 16 11" fill="none" className="-mt-px ml-[7px]"><path d="M1.500 9.500L8 2L14.500 9.500" stroke="#333" strokeWidth="1.800" /></svg>
      </div>
      <div className="mt-[6px] flex items-center">
        <span className="text-[21.200px] font-[350] leading-none text-[#333]">深证成指</span>
        <Num className="mt-[2px] ml-[8px] text-[21.500px] tracking-[0em]! text-[#05aa5b]">-0.39%</Num>
      </div>
    </div>
    {['买', '卖', '撤'].map((t) => (
      <div key={t} className="relative flex h-[97px] w-[158px] items-center justify-center pb-[6px] text-[34.500px] font-medium leading-none text-[#2b2b2b] before:absolute before:top-[18px] before:left-0 before:h-[59px] before:w-px before:bg-[#dedee2]">
        {t}
        {t === '买' && (
          <span className="absolute top-[4px] left-[94px] flex h-[26px] w-[63px] items-center justify-center rounded-t-[13px] rounded-r-[13px] rounded-bl-[2px] bg-[#fb3340] pb-px text-[15.500px] font-medium text-white">去提速</span>
        )}
      </div>
    ))}
    <div className="relative flex h-[97px] flex-1 flex-col items-center pt-[11px] pr-[2px] before:absolute before:top-[18px] before:left-0 before:h-[59px] before:w-px before:bg-[#dedee2]">
      <svg width="34" height="34" viewBox="0 0 34 34" fill="none">
        <circle cx="17" cy="17" r="15.500" stroke="#333" strokeWidth="2.200" />
        <g fill="#333"><circle cx="10.500" cy="17" r="1.700" /><circle cx="17" cy="17" r="1.700" /><circle cx="23.500" cy="17" r="1.700" /></g>
      </svg>
      <span className="mt-[10px] text-[21px] font-[350] leading-none text-[#666]">更多</span>
    </div>
  </footer>
);

export default function App() {
  return (
    <div className="flex h-[1665px] w-[769px] flex-col overflow-hidden bg-white font-['Noto_Sans_CJK_SC',sans-serif]">
      <Header />
      <Quotes />
      <News />
      <div className="h-[7px] bg-[#f3f5f9]" />
      <Tabs />
      <div className="flex h-[44px] items-center pt-[4px] pl-[8px] text-[23.200px] font-[350] leading-none text-[#505050]">
        <span className="-mt-[4px]">均价</span>
        <Num className="ml-[4px] text-[24px] font-normal! tracking-[0em]! text-[#f07a3c]">4.13</Num>
        <span className="-mt-[4px] ml-[13px]">最新</span>
        <Num className="ml-[4px] text-[24px] tracking-[0em]! text-[#05aa5b]">4.09</Num>
        <Num className="ml-[20px] text-[24px] tracking-[0.01em]! text-[#05aa5b]">-0.02</Num>
        <Num className="ml-[20px] text-[24px] tracking-[0.01em]! text-[#05aa5b]">-0.49%</Num>
      </div>
      <div className="flex h-[703px]">
        <Chart />
        <OrderBook />
      </div>
      <Tools />
      <Boards />
      <Footer />
    </div>
  );
}
